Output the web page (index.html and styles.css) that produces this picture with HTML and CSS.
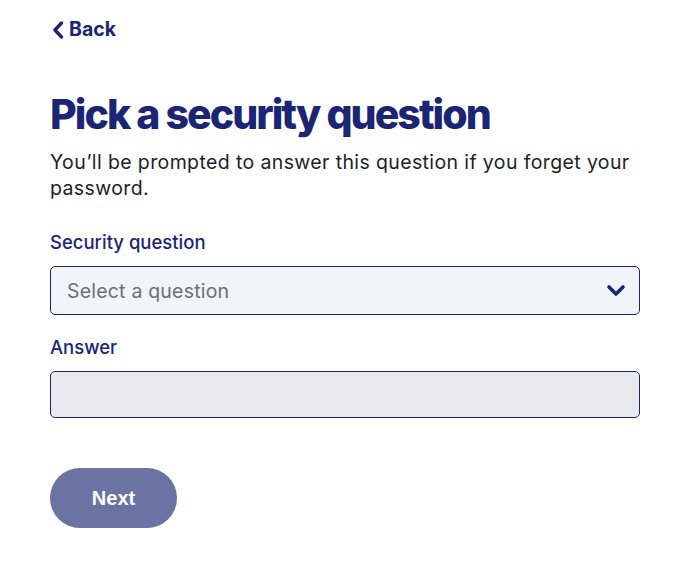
FILE: index.html
```html
<!DOCTYPE html>
<html lang="en">
<head>
<meta charset="utf-8">
<title>Pick a security question</title>
<link rel="stylesheet" href="styles.css">
</head>
<body>
<main class="page">
  <a class="back" href="#">
    <svg class="back-icon" width="12" height="18" viewBox="0 0 12 18" aria-hidden="true"><path d="M9.5 2 L3 9 L9.5 16" fill="none" stroke="currentColor" stroke-width="3.4" stroke-linecap="round" stroke-linejoin="round"/></svg>
    <span>Back</span>
  </a>
  <h1 class="title">Pick a security question</h1>
  <p class="intro">You’ll be prompted to answer this question if you forget your password.</p>
  <form class="form">
    <div class="field">
      <label class="label">Security question</label>
      <div class="select">
        <span class="placeholder">Select a question</span>
        <svg class="chev" width="20" height="13" viewBox="0 0 20 13" aria-hidden="true"><path d="M3 3 L10 10 L17 3" fill="none" stroke="currentColor" stroke-width="3.6" stroke-linecap="round" stroke-linejoin="round"/></svg>
      </div>
    </div>
    <div class="field">
      <label class="label">Answer</label>
      <div class="input"></div>
    </div>
    <button type="button" class="next">Next</button>
  </form>
</main>
</body>
</html>
```

FILE: styles.css
```css
html, body {
  margin: 0;
  padding: 0;
  background: #ffffff;
}
body {
  font-family: Inter, "Noto Sans", sans-serif;
  color: #1b1f2b;
}
.page {
  width: 590px;
  padding: 17px 0 0 50px;
  display: flex;
  flex-direction: column;
}
.back {
  display: flex;
  align-items: center;
  gap: 5px;
  color: #1c2573;
  text-decoration: none;
  font-weight: 700;
  font-size: 19.5px;
  line-height: 24px;
  padding-left: 2px;
}
.back-icon { display: block; margin-top: 1px; }
.title {
  margin: 49px 0 0 0;
  font-size: 41px;
  line-height: 48px;
  font-weight: 800;
  letter-spacing: -1.95px;
  color: #1c2573;
}
.intro {
  margin: 11px 0 0 0;
  font-size: 19.5px;
  line-height: 26px;
  color: #1b1f2b;
  letter-spacing: 0.38px;
}
.form {
  display: flex;
  flex-direction: column;
  margin-top: 29px;
}
.field {
  display: flex;
  flex-direction: column;
}
.field + .field { margin-top: 20px; }
.label {
  font-size: 18.5px;
  line-height: 24px;
  font-weight: 500;
  color: #1c2573;
  margin-bottom: 12px;
}
.select {
  height: 47px;
  border: 1px solid #1c2573;
  border-radius: 5px;
  background: #f0f5fa;
  display: flex;
  align-items: center;
  justify-content: space-between;
  padding: 0 13px 0 16px;
}
.placeholder {
  font-size: 19.5px;
  color: #6b6f76;
  letter-spacing: 0.2px;
}
.chev { color: #1c2573; display: block; }
.input {
  height: 45px;
  border: 1px solid #1c2573;
  border-radius: 5px;
  background: #e8ebee;
}
.next {
  margin-top: 50px;
  width: 127px;
  height: 60px;
  border: none;
  border-radius: 30px;
  background: #6b73a3;
  color: #ffffff;
  font-family: "Liberation Sans", Arial, sans-serif;
  font-weight: 700;
  font-size: 20px;
  cursor: pointer;
}
```
